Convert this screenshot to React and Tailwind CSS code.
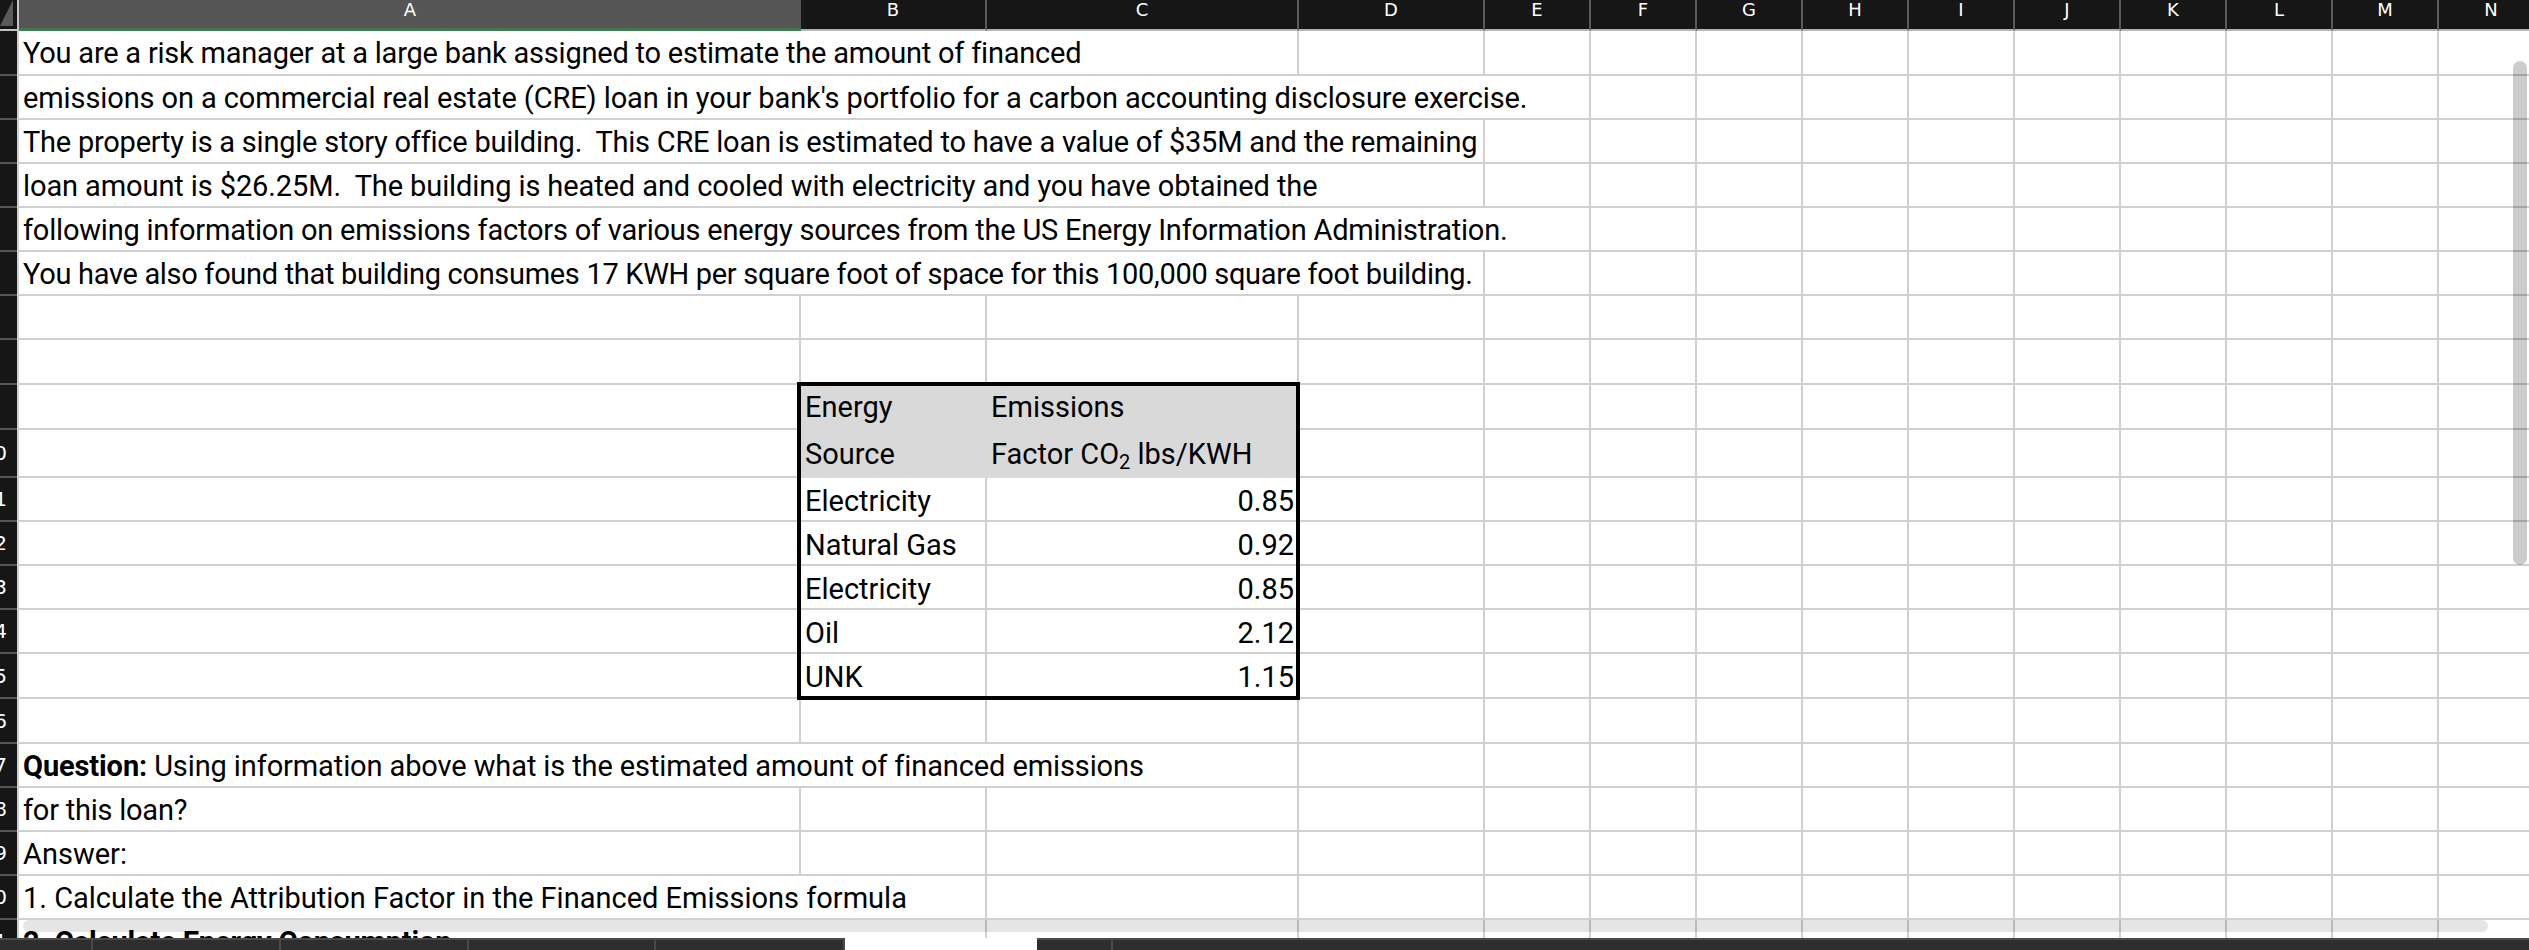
import React from 'react';

const columns = [
  { label: 'A', active: true },
  { label: 'B' }, { label: 'C' }, { label: 'D' }, { label: 'E' }, { label: 'F' }, { label: 'G' },
  { label: 'H' }, { label: 'I' }, { label: 'J' }, { label: 'K' }, { label: 'L' }, { label: 'M' }, { label: 'N' },
];

const template = 'grid grid-cols-[782px_186px_312px_186px_repeat(10,106px)] w-[2632px]';
const cell = 'box-border border-r-2 border-b-2 border-[#d0d0d0] bg-white overflow-visible whitespace-nowrap';
const spanClass = { 2: 'col-span-2', 3: 'col-span-3', 4: 'col-span-4', 5: 'col-span-5' };

const TextRow = ({ num, height, span = 1, tracking = '', children }) => (
  <Row num={num} height={height}>
    <div className={`${cell} ${spanClass[span] || ''} ${tracking} pl-[4px] pt-[3px]`}>{children}</div>
    {Array.from({ length: 14 - span }).map((_, i) => <div key={i} className={cell} />)}
  </Row>
);

const Row = ({ num, height, children }) => (
  <div className={`flex ${height}`}>
    <div className="w-[17px] shrink-0 bg-[#161616] border-b-2 border-[#555555] box-border overflow-hidden flex justify-end items-center">
      {num > 9 && <span className="shrink-0 text-white text-[20px] leading-none font-['DejaVu_Sans',sans-serif] mr-[10px]">{num}</span>}
    </div>
    <div className="w-[2px] shrink-0 bg-[#d0d0d0]" />
    <div className={`${template} h-full`}>{children}</div>
  </div>
);

const TableRow = ({ num, height, name, value }) => (
  <Row num={num} height={height}>
    <div className={cell} />
    <div className={`${cell} pl-[4px] pt-[4px]`}>{name}</div>
    <div className={`${cell} pr-[3px] pt-[4px] text-right`}>{value}</div>
    {Array.from({ length: 11 }).map((_, i) => <div key={i} className={cell} />)}
  </Row>
);

const TableHead = ({ num, height, pad, name, children }) => (
  <Row num={num} height={height}>
    <div className={cell} />
    <div className={`bg-[#d9d9d9] pl-[4px] ${pad} whitespace-nowrap`}>{name}</div>
    <div className={`bg-[#d9d9d9] pl-[4px] ${pad} whitespace-nowrap`}>{children}</div>
    {Array.from({ length: 11 }).map((_, i) => <div key={i} className={cell} />)}
  </Row>
);

export default function App() {
  return (
    <div className="relative w-[2529px] h-[950px] overflow-hidden bg-white text-black text-[29px] leading-[38px] font-['Roboto',sans-serif]">
      {/* Column headers */}
      <div className="flex h-[31px]">
        <div className="w-[19px] shrink-0 bg-[#161616] border-b-2 border-r-2 border-[#c4c4c4] box-border relative">
          <div className="absolute left-0 top-0 w-[13px] h-[26px] bg-[#5a5a5a] [clip-path:polygon(100%_0,100%_100%,0_100%)]" />
        </div>
        <div className={template}>
          {columns.map((col) => (
            <div
              key={col.label}
              className={col.active
                ? "bg-[#555555] border-b-[3px] border-[#3d7a4f] box-border text-center text-white text-[18px] leading-[20px] font-['DejaVu_Sans',sans-serif]"
                : "bg-[#161616] border-b-2 border-r-2 border-b-[#b5b5b5] border-r-[#5a5a5a] box-border text-center text-white text-[18px] leading-[20px] font-['DejaVu_Sans',sans-serif]"}
            >
              {col.label}
            </div>
          ))}
        </div>
      </div>

      {/* Sheet */}
      <TextRow num={1} height="h-[45px]" span={3} tracking="tracking-[-0.22px]">You are a risk manager at a large bank assigned to estimate the amount of financed</TextRow>
      <TextRow num={2} height="h-[44px]" span={5} tracking="tracking-[-0.1px]">emissions on a commercial real estate (CRE) loan in your bank's portfolio for a carbon accounting disclosure exercise.</TextRow>
      <TextRow num={3} height="h-[44px]" span={4} tracking="tracking-[-0.23px]">The property is a single story office building.&nbsp; This CRE loan is estimated to have a value of $35M and the remaining</TextRow>
      <TextRow num={4} height="h-[44px]" span={4} tracking="tracking-[-0.1px]">loan amount is $26.25M.&nbsp; The building is heated and cooled with electricity and you have obtained the</TextRow>
      <TextRow num={5} height="h-[44px]" span={5} tracking="tracking-[-0.21px]">following information on emissions factors of various energy sources from the US Energy Information Administration.</TextRow>
      <TextRow num={6} height="h-[44px]" span={4} tracking="tracking-[-0.31px]">You have also found that building consumes 17 KWH per square foot of space for this 100,000 square foot building.</TextRow>
      <TextRow num={7} height="h-[44px]" />
      <TextRow num={8} height="h-[45px]" />
      <TableHead num={9} height="h-[45px]" pad="pt-[3px]" name="Energy">Emissions</TableHead>
      <TableHead num={10} height="h-[48px]" pad="pt-[5px]" name="Source">
        Factor CO<sub className="text-[20px] leading-none">2</sub> lbs/KWH
      </TableHead>
      <TableRow num={11} height="h-[44px]" name="Electricity" value="0.85" />
      <TableRow num={12} height="h-[44px]" name="Natural Gas" value="0.92" />
      <TableRow num={13} height="h-[44px]" name="Electricity" value="0.85" />
      <TableRow num={14} height="h-[44px]" name="Oil" value="2.12" />
      <TableRow num={15} height="h-[45px]" name="UNK" value="1.15" />
      <TextRow num={16} height="h-[45px]" />
      <TextRow num={17} height="h-[44px]" span={3} tracking="tracking-[-0.11px]"><b>Question:</b> Using information above what is the estimated amount of financed emissions</TextRow>
      <TextRow num={18} height="h-[44px]" tracking="tracking-[-0.23px]">for this loan?</TextRow>
      <TextRow num={19} height="h-[44px]">Answer:</TextRow>
      <TextRow num={20} height="h-[44px]" span={2}>1. Calculate the Attribution Factor in the Financed Emissions formula</TextRow>
      <TextRow num={21} height="h-[44px]" span={2} tracking="tracking-[-0.15px]"><b>2. Calculate Energy Consumption</b></TextRow>

      {/* Table outline */}
      <div className="absolute left-[797px] top-[382px] w-[503px] h-[318px] border-4 border-black box-border pointer-events-none" />

      {/* Scrollbars */}
      <div className="absolute left-[2513px] top-[61px] w-[14px] h-[504px] rounded-full bg-black/20" />
      <div className="absolute left-[23px] top-[920px] w-[2465px] h-[12px] rounded-full bg-black/10" />

      {/* Sheet tabs */}
      <div className="absolute left-0 bottom-0 w-full h-[12px] flex bg-[#2e2e2e] border-t-2 border-[#4a4a4a] box-border">
        <div className="w-[93px] border-r-2 border-[#4a4a4a]" />
        <div className="w-[188px] border-r-2 border-[#4a4a4a]" />
        <div className="w-[188px] border-r-2 border-[#4a4a4a]" />
        <div className="w-[187px] border-r-2 border-[#4a4a4a]" />
        <div className="w-[189px] border-r-2 border-[#4a4a4a]" />
        <div className="w-[192px] -mt-[2px] h-[12px] bg-white" />
        <div className="w-[76px] border-r-2 border-[#4a4a4a]" />
      </div>
    </div>
  );
}
